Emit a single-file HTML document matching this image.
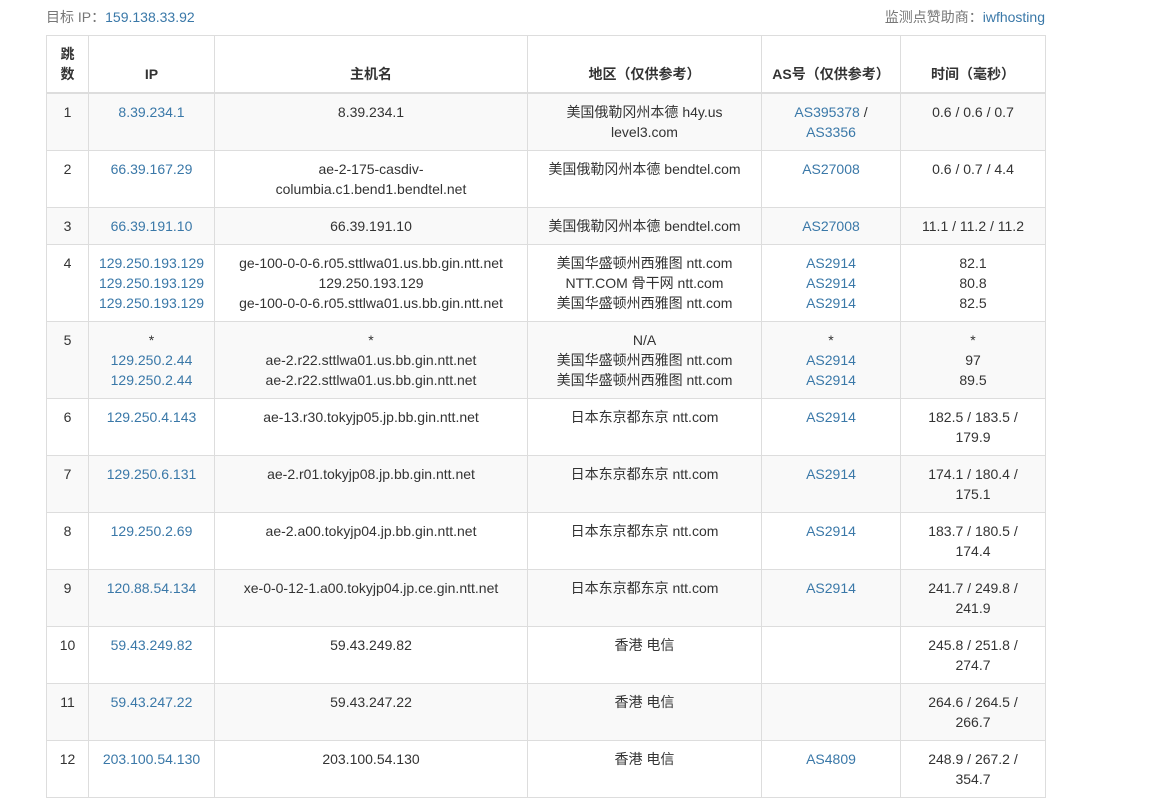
<!DOCTYPE html>
<html><head><meta charset="utf-8"><style>
html,body{margin:0;padding:0;background:#fff;width:1152px;height:784px;overflow:hidden}
body{font-family:"Liberation Sans","Noto Sans CJK SC",sans-serif;font-size:14px;color:#333;line-height:20px}
.top{position:absolute;left:46px;top:7px;width:999px;color:#777}
.top .r{position:absolute;right:0;top:0}
a{color:#3a78a8;text-decoration:none}
table{position:absolute;left:46px;top:35px;border-collapse:collapse;table-layout:fixed;width:999px}
td,th{border:1px solid #ddd;padding:8px;text-align:center;vertical-align:top}
th{vertical-align:bottom;font-weight:bold;border-bottom:2px solid #ddd;padding:8px 4px}
tbody tr:nth-child(odd){background:#f9f9f9}
</style></head><body>
<div class="top">目标 IP：<a>159.138.33.92</a><span class="r">监测点赞助商：<a>iwfhosting</a></span></div>
<table>
<colgroup><col style="width:42px"><col style="width:126px"><col style="width:313px"><col style="width:234px"><col style="width:139px"><col style="width:145px"></colgroup>
<thead><tr><th>跳<br>数</th><th>IP</th><th>主机名</th><th>地区（仅供参考）</th><th>AS号（仅供参考）</th><th>时间（毫秒）</th></tr></thead>
<tbody>
<tr><td>1<br>&nbsp;</td><td><a>8.39.234.1</a></td><td>8.39.234.1</td><td>美国俄勒冈州本德 h4y.us<br>level3.com</td><td><a>AS395378</a> /<br><a>AS3356</a></td><td>0.6 / 0.6 / 0.7</td></tr>
<tr><td>2</td><td><a>66.39.167.29</a></td><td>ae-2-175-casdiv-<br>columbia.c1.bend1.bendtel.net</td><td>美国俄勒冈州本德 bendtel.com</td><td><a>AS27008</a></td><td>0.6 / 0.7 / 4.4</td></tr>
<tr><td>3</td><td><a>66.39.191.10</a></td><td>66.39.191.10</td><td>美国俄勒冈州本德 bendtel.com</td><td><a>AS27008</a></td><td>11.1 / 11.2 / 11.2</td></tr>
<tr><td>4</td><td><a>129.250.193.129</a><br><a>129.250.193.129</a><br><a>129.250.193.129</a></td><td>ge-100-0-0-6.r05.sttlwa01.us.bb.gin.ntt.net<br>129.250.193.129<br>ge-100-0-0-6.r05.sttlwa01.us.bb.gin.ntt.net</td><td>美国华盛顿州西雅图 ntt.com<br>NTT.COM 骨干网 ntt.com<br>美国华盛顿州西雅图 ntt.com</td><td><a>AS2914</a><br><a>AS2914</a><br><a>AS2914</a></td><td>82.1<br>80.8<br>82.5</td></tr>
<tr><td>5</td><td>*<br><a>129.250.2.44</a><br><a>129.250.2.44</a></td><td>*<br>ae-2.r22.sttlwa01.us.bb.gin.ntt.net<br>ae-2.r22.sttlwa01.us.bb.gin.ntt.net</td><td>N/A<br>美国华盛顿州西雅图 ntt.com<br>美国华盛顿州西雅图 ntt.com</td><td>*<br><a>AS2914</a><br><a>AS2914</a></td><td>*<br>97<br>89.5</td></tr>
<tr><td>6</td><td><a>129.250.4.143</a></td><td>ae-13.r30.tokyjp05.jp.bb.gin.ntt.net</td><td>日本东京都东京 ntt.com</td><td><a>AS2914</a></td><td>182.5 / 183.5 /<br>179.9</td></tr>
<tr><td>7</td><td><a>129.250.6.131</a></td><td>ae-2.r01.tokyjp08.jp.bb.gin.ntt.net</td><td>日本东京都东京 ntt.com</td><td><a>AS2914</a></td><td>174.1 / 180.4 /<br>175.1</td></tr>
<tr><td>8</td><td><a>129.250.2.69</a></td><td>ae-2.a00.tokyjp04.jp.bb.gin.ntt.net</td><td>日本东京都东京 ntt.com</td><td><a>AS2914</a></td><td>183.7 / 180.5 /<br>174.4</td></tr>
<tr><td>9</td><td><a>120.88.54.134</a></td><td>xe-0-0-12-1.a00.tokyjp04.jp.ce.gin.ntt.net</td><td>日本东京都东京 ntt.com</td><td><a>AS2914</a></td><td>241.7 / 249.8 /<br>241.9</td></tr>
<tr><td>10</td><td><a>59.43.249.82</a></td><td>59.43.249.82</td><td>香港 电信</td><td></td><td>245.8 / 251.8 /<br>274.7</td></tr>
<tr><td>11</td><td><a>59.43.247.22</a></td><td>59.43.247.22</td><td>香港 电信</td><td></td><td>264.6 / 264.5 /<br>266.7</td></tr>
<tr><td>12</td><td><a>203.100.54.130</a></td><td>203.100.54.130</td><td>香港 电信</td><td><a>AS4809</a></td><td>248.9 / 267.2 /<br>354.7</td></tr>
</tbody></table>
</body></html>
